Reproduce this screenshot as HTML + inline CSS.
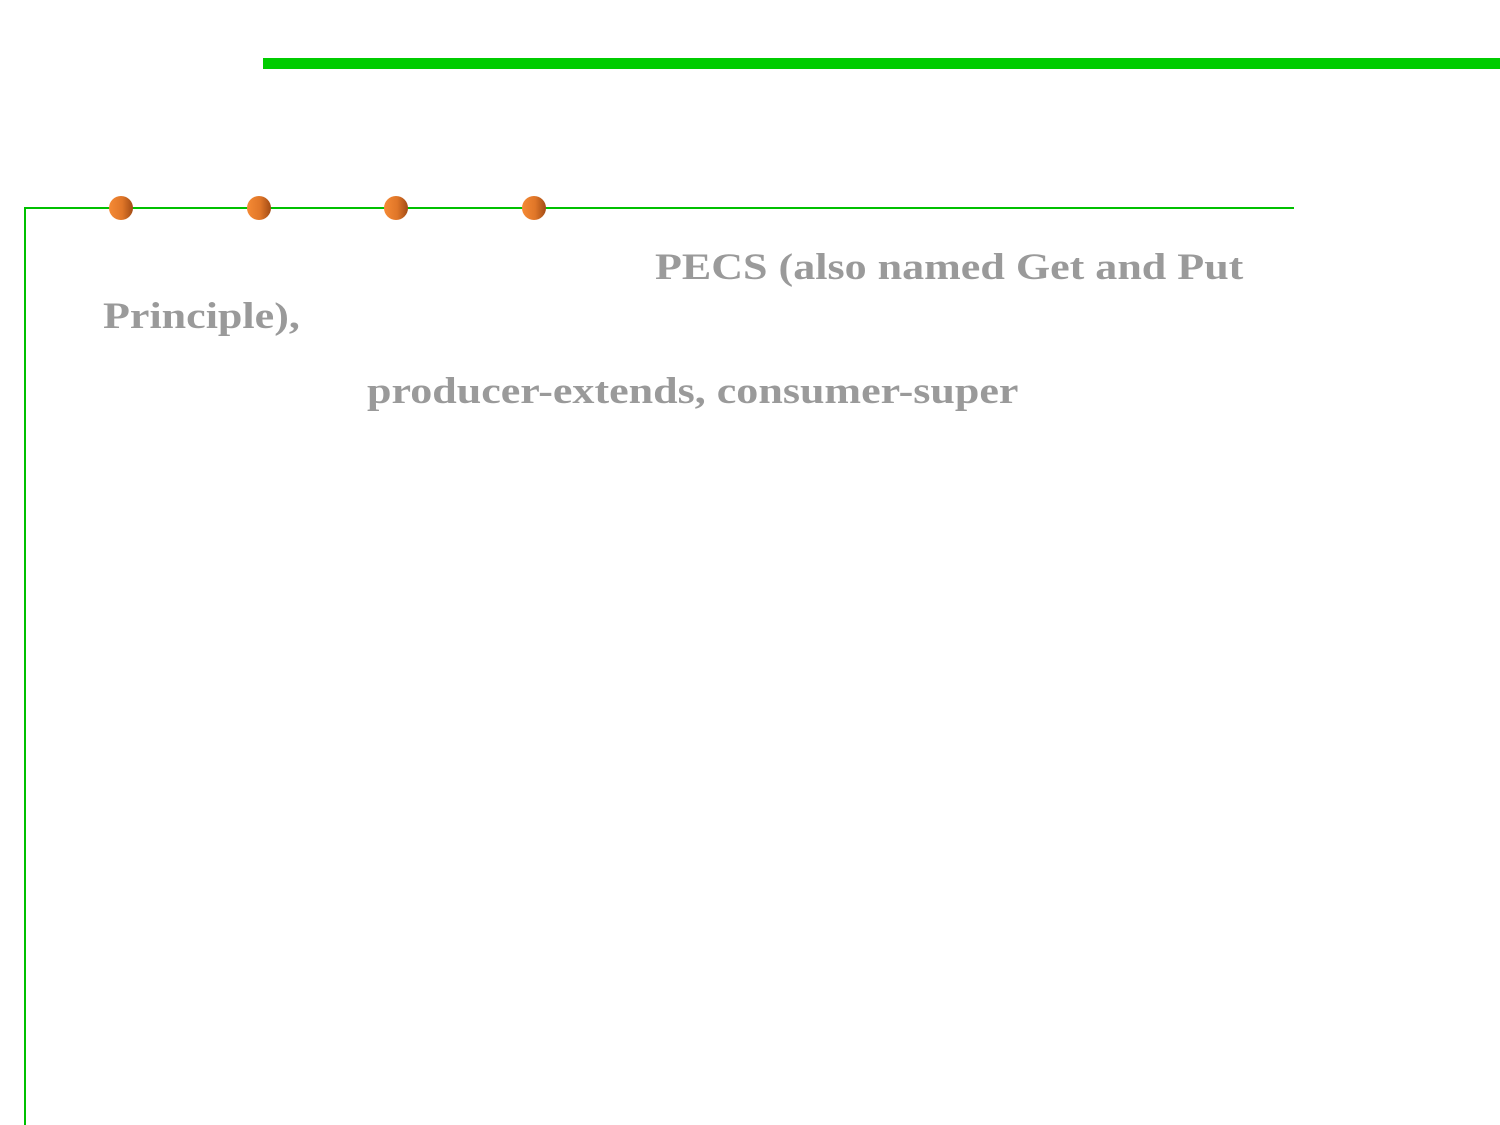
<!DOCTYPE html>
<html><head><style>
body{margin:0;width:1500px;height:1125px;background:#fff;position:relative;overflow:hidden}
.a{position:absolute}
.dot{position:absolute;width:24px;height:24px;border-radius:50%;background:linear-gradient(90deg,#f58a35 0%,#e07628 55%,#a24b15 100%);top:196px}
.t{position:absolute;font-family:"Liberation Serif",serif;font-weight:bold;color:#9a9a9a;font-size:37px;white-space:nowrap;line-height:1;transform:scaleX(1.19);transform-origin:left top}
</style></head><body>
<div class="a" style="left:263px;top:58px;width:1237px;height:11px;background:#00cc00"></div>
<div class="a" style="left:24px;top:207px;width:1270px;height:2px;background:#00c000"></div>
<div class="a" style="left:24px;top:207px;width:2px;height:918px;background:#00c000"></div>
<div class="dot" style="left:109px"></div>
<div class="dot" style="left:247px"></div>
<div class="dot" style="left:384px"></div>
<div class="dot" style="left:522px"></div>
<div class="t" style="left:655px;top:249px">PECS (also named Get and Put</div>
<div class="t" style="left:103px;top:298px">Principle),</div>
<div class="t" style="left:367px;top:373px">producer-extends, consumer-super</div>
</body></html>
